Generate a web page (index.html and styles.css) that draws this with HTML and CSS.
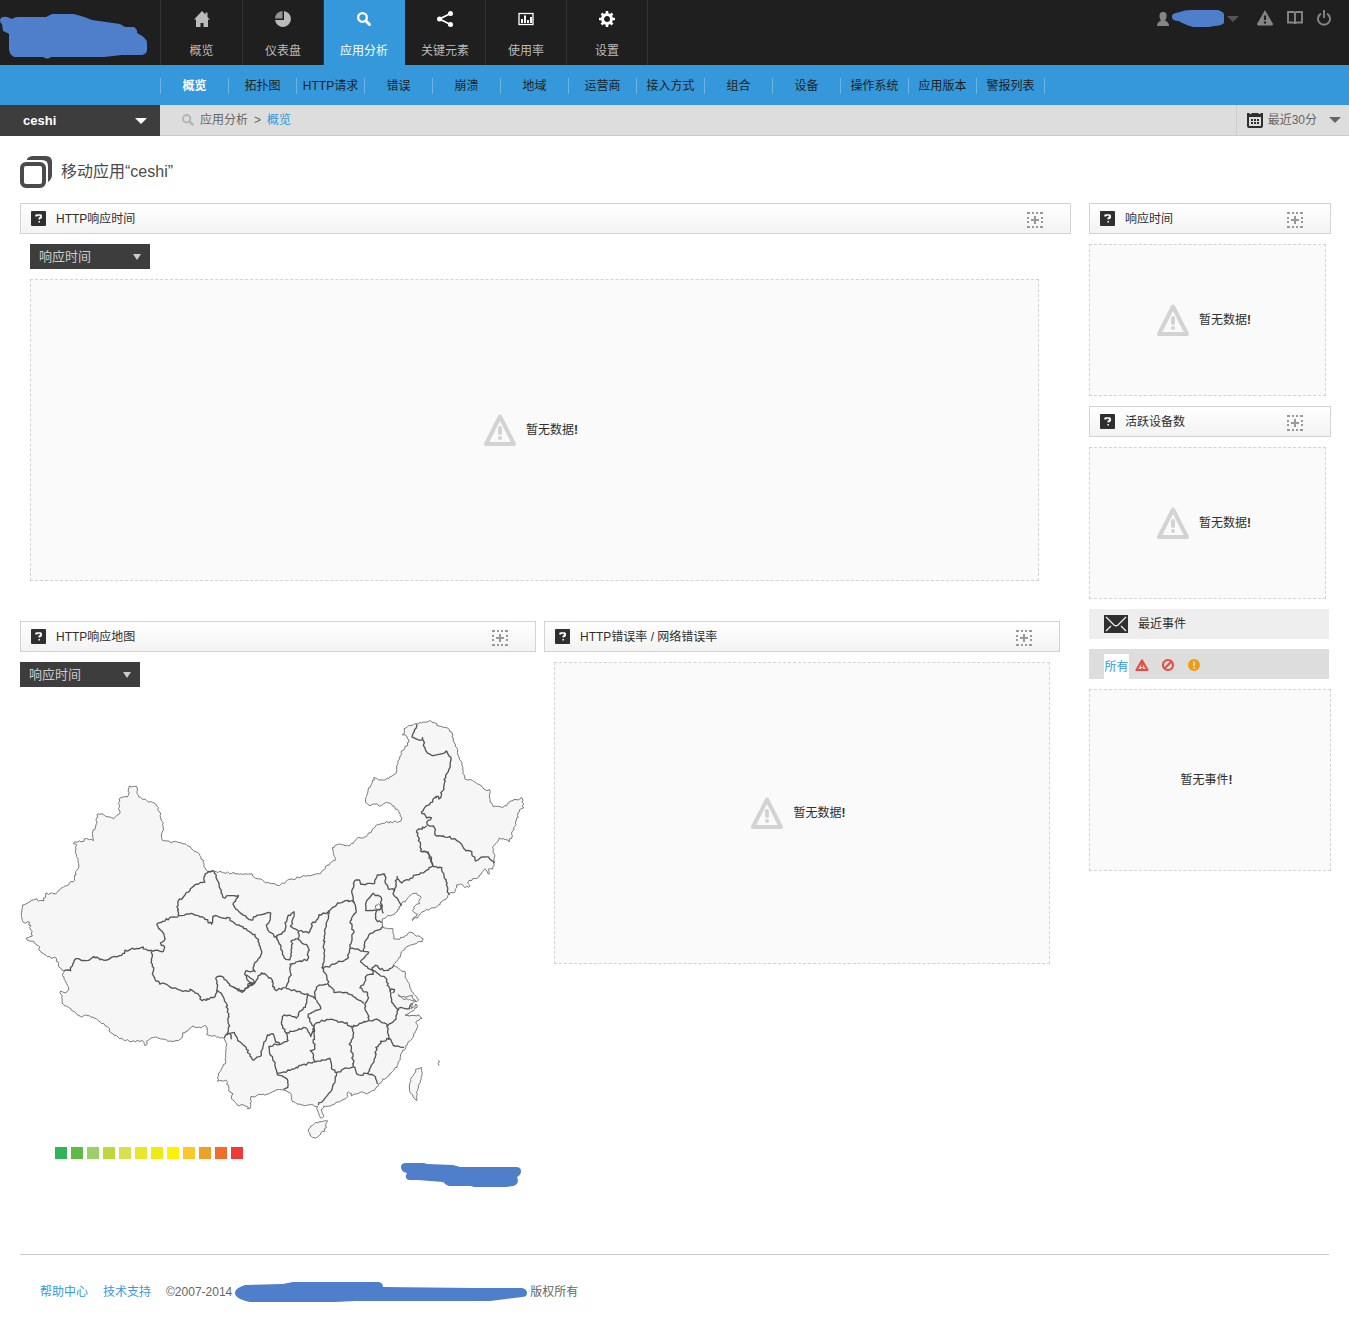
FILE: index.html
```html
<!DOCTYPE html>
<html lang="zh-CN">
<head>
<meta charset="utf-8">
<title>移动应用 - 概览</title>
<link rel="stylesheet" href="styles.css">
</head>
<body>
<svg class="defs" width="0" height="0" aria-hidden="true">
  <symbol id="help" viewBox="0 0 15 15"><rect width="15" height="15" rx="1" fill="#2f2f2f"/><path d="M5 5.6V4.5h1V4h3.500v.8h.7v1.700h-.8v.7H8.300v1.300M8.200 10v1.500" fill="none" stroke="#fff" stroke-width="1.500"/></symbol>
  <symbol id="add" viewBox="0 0 16 16"><path d="M0 1h3M5 1h2M9 1h2M13 1h3M0 15h3M5 15h2M9 15h2M13 15h3M1 5v2M1 9v2M15 5v2M15 9v2M8 4v8M4 8h8" fill="none" stroke="#999" stroke-width="2"/></symbol>
  <symbol id="warn" viewBox="0 0 32 32"><path d="M16 2.500 2 30h28z" fill="none" stroke="#d3d3d3" stroke-width="4" stroke-linejoin="round"/><path d="M16 14v5" stroke="#d3d3d3" stroke-width="4" stroke-linecap="round"/><circle cx="16" cy="24" r="2" fill="#d3d3d3"/></symbol>
  <symbol id="search" viewBox="0 0 12 12"><circle cx="4.700" cy="4.700" r="3.700" fill="none" stroke="currentColor" stroke-width="2"/><path d="m7.500 7.500 3.200 3.200" stroke="currentColor" stroke-width="2.500" stroke-linecap="round"/></symbol>
</svg>

<header class="topbar">
  <a class="logo" href="#" aria-label="首页"><svg width="148" height="65" viewBox="0 0 148 65"><path d="M0 20q1-4 7-3l5 2q2-2 6-2h28l6-3h22q8 2 18 6l28 4 5 3h9q4 3 3 6 10 5 10 10v7q0 4-5 5h-20l-18 2H51q-3 3-8 0H14q-5-3-5-8V34q-1-1-6-3L2 24Q0 23 0 20z" fill="#4f7ecb"/></svg></a>
  <nav class="mainnav">
    <a href="#"><svg width="16" height="16" viewBox="0 0 16 16"><path d="M8 0 0 8.500h2V16h4.500v-4h3v4H14V8.500h2L13.500 6V1.500h-2V3.500z" fill="currentColor"/></svg>概览</a>
    <a href="#"><svg width="16" height="16" viewBox="0 0 16 16"><path d="M9 0a8 8 0 1 1-9 9h9z" fill="currentColor"/><path d="M7.500 0v7.500H0A8 8 0 0 1 7.500 0z" fill="currentColor" opacity=".75"/></svg>仪表盘</a>
    <a href="#" class="active"><svg width="14" height="16" viewBox="0 0 14 16"><use href="#search" y="1" width="14" height="14"/></svg>应用分析</a>
    <a href="#" class="bright"><svg width="16" height="16" viewBox="0 0 16 16"><path d="M13.500 2.500 2.500 8l11 5.500" fill="none" stroke="currentColor" stroke-width="1.800"/><circle cx="13.500" cy="2.500" r="2.500" fill="currentColor"/><circle cx="2.500" cy="8" r="2.500" fill="currentColor"/><circle cx="13.500" cy="13.500" r="2.500" fill="currentColor"/></svg><span>关键元素</span></a>
    <a href="#" class="bright"><svg width="16" height="16" viewBox="0 0 16 16"><rect x="1" y="2.500" width="14" height="11" fill="none" stroke="currentColor" stroke-width="1.300"/><path d="M4 12V8M7 12V4.500M10 12V9M13 12V6" stroke="currentColor" stroke-width="2"/></svg><span>使用率</span></a>
    <a href="#" class="bright"><svg width="16" height="16" viewBox="0 0 16 16"><circle cx="8" cy="8" r="4.500" fill="none" stroke="currentColor" stroke-width="3"/><path d="M8 0v3M8 13v3M0 8h3M13 8h3M2.500 2.500l2 2M11.500 11.500l2 2M13.500 2.500l-2 2M2.500 13.500l2-2" stroke="currentColor" stroke-width="2.600"/></svg><span>设置</span></a>
  </nav>
  <div class="tools">
    <button class="user" type="button" aria-label="用户"><svg width="12" height="14" viewBox="0 0 12 14"><path d="M6 0c3 0 4 2 3.500 5Q9 8 8 8.500 12 10 12 14H0Q0 10 4 8.500 3 8 2.500 5 2 0 6 0z" fill="#858585"/></svg><svg width="54" height="18" viewBox="0 0 54 18"><path d="M1 6q0-3 8-4Q13 0 20 0h27q7 2 6 6v7q-3 3-10 3l-5 1H22Q10 13 8 11 0 11 1 6z" fill="#4f7ecb"/></svg><i class="caret dim"></i></button>
    <a href="#" aria-label="警报"><svg width="16" height="16" viewBox="0 0 16 16"><path d="M8 0 0 14q0 1.500 1.500 1.500h13Q16 15.500 16 14z" fill="#858585"/><path d="M8 5.500v4.500M8 11.500v2" stroke="#1f1f1f" stroke-width="2.200"/></svg></a>
    <a href="#" aria-label="文档"><svg width="16" height="16" viewBox="0 0 16 16"><path d="M1 2h5q2 0 2 1.500Q8 2 10 2h5v10.500h-5q-2 0-2 1.500 0-1.500-2-1.500H1zM8 3v10" fill="none" stroke="#858585" stroke-width="1.900"/></svg></a>
    <a href="#" aria-label="退出"><svg width="14" height="16" viewBox="0 0 14 16"><path d="M4 3.600a6 6 0 1 0 6 0M7 0v8" fill="none" stroke="#858585" stroke-width="1.900"/></svg></a>
  </div>
</header>

<nav class="subnav">
  <a href="#" class="active">概览</a><a href="#">拓扑图</a><a href="#">HTTP请求</a><a href="#">错误</a><a href="#">崩溃</a><a href="#">地域</a><a href="#">运营商</a><a href="#">接入方式</a><a href="#">组合</a><a href="#">设备</a><a href="#">操作系统</a><a href="#">应用版本</a><a href="#">警报列表</a>
</nav>

<div class="crumbbar">
  <button class="apppick" type="button">ceshi<i class="caret"></i></button>
  <div class="crumbs"><svg width="12" height="12"><use href="#search"/></svg><span>应用分析</span><span>&gt;</span><a href="#">概览</a></div>
  <button class="range" type="button"><svg width="16" height="16" viewBox="0 0 16 16"><path d="M1 2h14v12q0 1-1 1H2q-1 0-1-1z" fill="none" stroke="#2f2f2f" stroke-width="2"/><path d="M1 3.500h14" stroke="#2f2f2f" stroke-width="3"/><path d="M3.500 0v2M12.500 0v2" stroke="#ddd" stroke-width="2"/><path d="M4 8h8M4 11h8" stroke="#2f2f2f" stroke-width="2" stroke-dasharray="2 1"/></svg><span>最近30分</span><i class="caret"></i></button>
</div>

<main>
  <h1><svg width="32" height="32" viewBox="0 0 32 32"><path d="M7 3Q9 0 13 0h13q6 0 6 6v13q0 4-4 7V10q0-6-6-6H7z" fill="#4b4b4b"/><rect x="2" y="8" width="22" height="22" rx="4" fill="#fff" stroke="#4b4b4b" stroke-width="4"/></svg>移动应用“ceshi”</h1>
  <div class="columns">
    <div class="left">
      <section>
        <h2><svg width="15" height="15"><use href="#help"/></svg><span>HTTP响应时间</span><button type="button" aria-label="添加"><svg width="16" height="16"><use href="#add"/></svg></button></h2>
        <div class="inset">
          <label class="pick"><select aria-label="指标"><option>响应时间</option></select></label>
          <div class="empty tall"><svg width="32" height="32"><use href="#warn"/></svg><span>暂无数据<b>!</b></span></div>
        </div>
      </section>
      <div class="pair">
        <section class="mapcard">
          <h2><svg width="15" height="15"><use href="#help"/></svg><span>HTTP响应地图</span><button type="button" aria-label="添加"><svg width="16" height="16"><use href="#add"/></svg></button></h2>
          <label class="pick"><select aria-label="地图指标"><option>响应时间</option></select></label>
          <svg class="map" viewBox="20 700 516 440" role="img" aria-label="地图">
            <g transform="translate(200 860) scale(.33333)" class="land">
              <path class="coast" d="M22 34 14 23 7 0-2-12-4-23-18-27-30-38-48-50-70-53-90-54-114-59-119-70-112-90-111-115-120-135-127-160-140-172-155-173-170-183-185-195-189-220-200-222-212-219-214-202-220-192-240-187-244-172-242-140-252-130-264-125-285-132-306-140-314-105-322-70-317-58-330-62-340-64-355-57-382-50-370-42-373-20-365 5-363 20-373 30-377 60-400 75-418 85-428 99-460 101-472 123-485 125-492 117-508 120-515 130-530 135-536 148-538 170-534 186-512 188-508 210-503 228-520 238-500 245-485 257-478 278-455 290-432 296-425 320-407 332-412 345-402 370-395 388-405 398-421 395-413 410-414 432-395 442-375 458-353 474-342 465-328 468-300 485-280 500-270 515-250 530-230 540-195 545-170 542-163 560-157 542-135 530-105 538-80 547-60 538-50 520-22 500-5 503 15 495 22 505 22 527 50 530 68 535 78 550 80 580 75 610 55 640 52 664 80 660 85 690 100 700 95 718 118 738 140 735 145 748 152 745 155 712 175 705 200 705 220 692 250 688 272 700 280 725 300 735 330 735 352 740 355 765 365 776 372 768 362 755 370 742 395 735 420 725 440 715 445 692 455 708 480 698 505 700 522 690 535 675 555 655 575 635 595 615 600 590 612 570 625 550 640 530 652 500 650 485 665 475 655 465 615 465 640 455 652 440 640 425 655 420 640 405 625 370 612 335 580 315 600 292 605 275 620 262 640 250 665 245 670 232 645 225 628 215 615 228 595 240 582 235 578 208 550 200 545 180 560 168 580 165 590 155 600 136 625 115 640 100 655 102 663 115 655 130 642 140 640 155 650 165 635 180 650 175 665 158 685 148 710 140 730 120 747 105 762 95 775 71 795 80 810 83 805 65 830 55 848 40 855 27 868 42 865 30 880 25 883 10 883-15 878-45 890-53 898-65 928-56 937-80 950-115 957-150 970-158 967-187 950-182 930-175 918-160 878-160 870-180 868-210 855-210 845-222 825-235 793-245 785-290 775-320 762-355 755-380 740-397 715-402 695-416 665-412 635-407 615-395 608-377 623-370 625-350 605-325 592-285 588-260 570-250 552-236 523-248 505-205 496-178 505-163 530-168 540-160 553-174 570-172 595-145 605-125 600-116 550-112 525-102 515-85 498-70 475-67 450-43 405-48 396-30 405 0 382 18 370 35 345 46 300 50 270 60 235 77 200 68 165 52 152 43 110 40 42 35z"/>
              <path class="coast" d="M325 815l7-20 23-10 27-1-4 21-28 30-20-7zM665 622l3 18-13 40-7 42-20-32 2-30 20-30zM714 602l4 5-1 10"/>
              <path class="coast" d="M595 403l15 8 25-3 15 15-15-5-25 0zM615 465l20 4 20-4M640 425l-8 22 15-15M528 135l10-4 4 15-13 2z"/>
            </g>
            <g transform="translate(10 770) scale(.33333)" class="inner">
              <path d="M163 602l19-1 5-21 8-14 15 4 20 3 15-11 17-1 6 7 22 1 20-9 25-5 10-12 25-7 25-3 29 11 16-2 20 4 3-11-10-18 14-7-7-20-17-20-5-7 32-15 37-11-4-27 5-22 12-2 10-16 20-22 25-10 9-3v-23l8-7 20-1"/>
              <path d="M424 544l3 16-5 10 8 20-2 25 7 15 15 12 18-2 17 15 35 7 28-2 20 20 7 12 15-2 22-7 8-20 15 12 13 25 7 30 2 45-7 15-7 15M507 437l38-7 25 8 20 12 16 16 2-30 27 10 20-2 35 24 25 14 20 13 11 15 4 20 7 15-12 20-17 25 7 15-30 0 5 20 18 15-13 10-15 15-25-10-25-20-10-13-22-2 4 20-2 23"/>
            </g>
            <g transform="translate(200 860) scale(.33333)" class="inner">
              <path d="M42 35l13 35 15 45 20-10 25 3-17 27 32 30 23 19 12-14 25-5 23-7v14l-15 33 27 25 27-15 10-45 18-12v22l-8 20 26 12-5 26-21 2 6 20-8 40-20-10-10-40-15-20M298 212l32 8 5-25 25-30 28-13 27-24 25-6 20 2-3-34 8-25 13-8 2 18 45-7 5-23 23-5 9 45 23 3 5-38 15 20 35-22 40-16 17-17 0-18-17-22-14 0"/>
              <path d="M293 238l32 24v38l-22 2-33 10 3 28-15 45-36 5-4-30-33-22-20 27-40 30-25-13M138 345l20 10 8 15-20 2 0 12M258 385l42 10 22 10 28 15-5-25 10-20 30-3-5-22-12-25 5-35-1-50 6-50 10-38M368 325l42-15 35-15 3-30 12-50-10-35 20-30-10-26M448 265l42 8 18 5-28 30 35 20 10-13 20 13 25 2 12-15M490 273l5-28 15-25 40-20M585 88l-5 12 17 20 5 17M497 135l3-15 22-20 21 15 2 30-15 7-33-2zM530 152l-2 26 17 10M543 130l7 30"/>
              <path d="M515 328l7 17-22 0-5 25-13 10 8 15 15 5v20l-13 10 16 50 32 0 22 15 23-15 10-35-20-15-5-35-10-35-25-20zM570 395l8-12 8 8-8 8M595 445l35 0 5-15M385 372l20 23 45 5 20 15 22 15M322 405l-2 25-15 20-15 22-40-7-5 25 15 30 40-15 18 0 17 25 7-30-12-15-5-25 37-15-12-25M342 500l8-13 35-9 55 12 15 12 53-22M455 502l5 28-10 25 8 35 2 30-30 8-20 12-15-15-5-30-45 10-13-35 13-5-5-35 2-30M345 605l-50 15-35 15-30 5-5-30-15-30-5-20 35-10 25-5-5-25M90 520l10-5 15 25 20 20 23 40 24-10 6-30 17-35 15-5 5 25 15 5M230 640l35 20-3 25-12 3M410 640l-10 40-25 35-20 20M460 620l15 25 28-5 17-35 10-40 15-20 23-10-6-40M568 535l12 23 32 4M503 640l22 5 7 27M80 525l10-5 5 18"/>
            </g>
            <g transform="translate(350 710) scale(.33333)" class="inner">
              <path d="M200 43l-5 17-10 18 20 14 15-7 5 40 20 13 35-6 8-10 17 26-8 32-12 20-2 28-15 40-6-13-22 25-25 25 15 17 13 3-13 7 2 16 20 0 6 27 37 5 33 15 17 25 17 5 16 30 17-15 15-3 23 23M247 465l28 10 15 45 7 35M247 465l-14-40-20 0-8-45-5-18 30-14"/>
            </g>
          </svg>
          <div class="legend"><i class="c1"></i><i class="c2"></i><i class="c3"></i><i class="c4"></i><i class="c5"></i><i class="c6"></i><i class="c7"></i><i class="c8"></i><i class="c9"></i><i class="c10"></i><i class="c11"></i><i class="c12"></i></div>
          <svg class="credit" width="120" height="26" viewBox="0 0 120 26"><path d="M0 5q0-4 5-4h18l3 1 26 1 7 2h56q5 0 5 4t-4 6q3 7-4 9l-7 1H73l-3-1H48q-3-1-6-4l-25-2H8q-4-1-3-5l1-2Q0 10 0 5z" fill="#4f7ecb"/></svg>
        </section>
        <section>
          <h2><svg width="15" height="15"><use href="#help"/></svg><span>HTTP错误率 / 网络错误率</span><button type="button" aria-label="添加"><svg width="16" height="16"><use href="#add"/></svg></button></h2>
          <div class="inset narrow"><div class="empty tall"><svg width="32" height="32"><use href="#warn"/></svg><span>暂无数据<b>!</b></span></div></div>
        </section>
      </div>
    </div>
    <aside>
      <h2><svg width="15" height="15"><use href="#help"/></svg><span>响应时间</span><button type="button" aria-label="添加"><svg width="16" height="16"><use href="#add"/></svg></button></h2>
      <div class="empty short"><svg width="32" height="32"><use href="#warn"/></svg><span>暂无数据<b>!</b></span></div>
      <h2><svg width="15" height="15"><use href="#help"/></svg><span>活跃设备数</span><button type="button" aria-label="添加"><svg width="16" height="16"><use href="#add"/></svg></button></h2>
      <div class="empty short"><svg width="32" height="32"><use href="#warn"/></svg><span>暂无数据<b>!</b></span></div>
      <h3><svg width="24" height="18" viewBox="0 0 24 18"><rect width="24" height="18" fill="#2f2f2f"/><path d="m2 2 8 8q2 1.500 4 0l8-8M2 16l5-5M22 16l-5-5" fill="none" stroke="#eee" stroke-width="1.300"/></svg>最近事件</h3>
      <div class="tabs">
        <button type="button" class="all">所有</button>
        <button type="button" aria-label="警告"><svg width="14" height="14" viewBox="0 0 14 14"><path d="M7 2.500 1.500 12h11z" fill="none" stroke="#e74c3c" stroke-width="2.200" stroke-linejoin="round"/><path d="M7 5v4M7 10v1.500" stroke="#e74c3c" stroke-width="1.800"/></svg></button>
        <button type="button" aria-label="禁止"><svg width="14" height="14" viewBox="0 0 14 14"><circle cx="7" cy="7" r="5" fill="none" stroke="#e74c3c" stroke-width="2.200"/><path d="m3.500 10.500 7-7" stroke="#e74c3c" stroke-width="2"/></svg></button>
        <button type="button" aria-label="提示"><svg width="14" height="14" viewBox="0 0 14 14"><circle cx="7" cy="7" r="6" fill="#f39c12"/><path d="M7 3.500v4.500M7 9v1.800" stroke="#ddd" stroke-width="1.800"/></svg></button>
      </div>
      <div class="empty events"><span>暂无事件<b>!</b></span></div>
    </aside>
  </div>
</main>

<footer>
  <a href="#">帮助中心</a><a href="#">技术支持</a>
  <span class="copy">©2007-2014<svg width="292" height="20" viewBox="0 0 292 20"><path d="M0 11q0-5 10-8l38-1 10-2h86q4 1 4 5l90 1h49q5 1 5 5t-5 4l-32 4H120l-20 1H15Q0 17 0 11z" fill="#4f7ecb"/></svg>版权所有</span>
</footer>
<script src="map.js"></script>
</body>
</html>
```

FILE: map.js
```js
// Adds fine irregularity to the simplified province borders.
let seed = 7;
function jitter(amount) {
  seed = (seed * 16807) % 2147483647;
  return (seed / 2147483647 - 0.5) * amount;
}
document.querySelectorAll('.map path').forEach(function (path) {
  const probe = document.createElementNS('http://www.w3.org/2000/svg', 'path');
  const parts = path.getAttribute('d').split(/(?=M)/).map(function (part) {
    probe.setAttribute('d', part);
    const length = probe.getTotalLength();
    const steps = Math.max(2, Math.round(length / 6));
    const points = [];
    for (let i = 0; i <= steps; i++) {
      const p = probe.getPointAtLength(length * i / steps);
      const amount = i === 0 || i === steps ? 0 : 6;
      points.push((p.x + jitter(amount)).toFixed(1) + ' ' + (p.y + jitter(amount)).toFixed(1));
    }
    return 'M' + points.join('L');
  });
  path.setAttribute('d', parts.join(''));
});
```

FILE: styles.css
```css
* { box-sizing: border-box; }
body {
  margin: 0;
  background: #fff;
  color: #2f2f2f;
  font: 12px/20px "Liberation Sans", "Noto Sans CJK SC", sans-serif;
}
a { color: #3498db; text-decoration: none; }
button { border: 0; padding: 0; background: none; font: inherit; color: inherit; cursor: pointer; }
svg { display: block; flex: none; }
.defs { position: absolute; }

.caret {
  width: 0;
  height: 0;
  border: 6px solid transparent;
  border-top-color: currentColor;
  border-bottom: 0;
}

.topbar { display: flex; height: 65px; background: #1f1f1f; }
.logo { width: 160px; flex: none; }
.mainnav { display: flex; border-left: 1px solid #333; }
.mainnav a {
  display: flex;
  flex-direction: column;
  align-items: center;
  gap: 14px;
  width: 81px;
  padding-top: 11px;
  border-right: 1px solid #333;
  color: #bbb;
}
.mainnav a:first-child { width: 82px; }
.mainnav a.active { background: #3498db; border-color: #3498db; color: #fff; }
.mainnav .bright { color: #fff; }
.mainnav .bright span { color: #bbb; }
.tools { display: flex; align-items: flex-start; gap: 14px; margin-left: auto; padding: 10px 18px 0 0; }
.user { display: flex; align-items: center; gap: 2px; height: 18px; margin-right: 4px; }
.dim { color: #555; }

.subnav { display: flex; align-items: center; height: 40px; padding: 2px 0 0 160px; background: #3498db; }
.subnav a {
  width: 68px;
  height: 16px;
  line-height: 16px;
  border-left: 1px solid #6fb3e3;
  text-align: center;
  white-space: nowrap;
  color: #1f1f1f;
}
.subnav a:last-child { width: 69px; border-right: 1px solid #6fb3e3; }
.subnav .active { color: #fff; font-weight: bold; }

.crumbbar { display: flex; height: 31px; background: #ddd; border-bottom: 1px solid #ccc; }
.apppick {
  display: flex;
  align-items: center;
  justify-content: space-between;
  width: 160px;
  height: 31px;
  padding: 0 13px 0 23px;
  background: #3d3d3d;
  color: #fff;
  font-size: 13px;
  font-weight: bold;
}
.crumbs { display: flex; align-items: center; gap: 6px; padding-left: 22px; color: #666; }
.crumbs svg { color: #b5b5b5; }
.range {
  display: flex;
  align-items: center;
  gap: 5px;
  margin-left: auto;
  padding: 0 8px 0 10px;
  border-left: 1px solid #ccc;
  color: #666;
}
.range .caret { margin-left: 7px; }

main { padding: 20px 18px 0 20px; }
h1 { display: flex; align-items: center; gap: 9px; margin: 0 0 15px; font-size: 16px; font-weight: normal; line-height: 32px; color: #4b4b4b; }
.columns { display: flex; gap: 18px; }
.left { flex: 1; min-width: 0; }
aside { width: 242px; flex: none; }
h2 {
  display: flex;
  align-items: center;
  gap: 10px;
  height: 31px;
  margin: 0 0 10px;
  padding: 0 27px 0 10px;
  border: 1px solid #d3d3d3;
  background: linear-gradient(#fff, #f3f3f3);
  font-size: 12px;
  font-weight: normal;
}
h2 button { margin-left: auto; padding-top: 2px; }
.inset { margin: 0 32px 40px 10px; }
.inset.narrow { margin-right: 10px; }
.pick {
  display: flex;
  align-items: center;
  position: relative;
  width: 120px;
  height: 25px;
  background: #3d3d3d;
}
.pick select {
  appearance: none;
  width: 100%;
  height: 25px;
  padding: 0 9px;
  border: 0;
  background: none;
  color: #ccc;
  font: 13px/25px "Liberation Sans", "Noto Sans CJK SC", sans-serif;
}
.pick::after {
  content: "";
  position: absolute;
  right: 9px;
  border: 4px solid transparent;
  border-top: 6px solid #ccc;
  border-bottom: 0;
  pointer-events: none;
}
.pick + .empty { margin-top: 10px; }
.empty {
  display: flex;
  align-items: center;
  justify-content: center;
  gap: 10px;
  padding-right: 7px;
  border: 1px dashed #d3d3d3;
  background: #fafafa;
}
.tall { height: 302px; }
.short { height: 152px; margin: 0 5px 10px 0; }
.events { height: 182px; }

.pair { display: grid; grid-template-columns: 1fr 1fr; gap: 8px; margin-right: 11px; }
.mapcard { display: flex; flex-direction: column; }
.map { width: 100%; margin-top: 13px; }
.land .coast { fill: #f6f6f6; stroke: #777; stroke-width: 3; stroke-linejoin: round; }
.inner { fill: none; stroke: #555; stroke-width: 4; stroke-linejoin: round; }
.legend { display: flex; gap: 4px; margin: 7px 0 3px 35px; }
.legend i { width: 12px; height: 12px; }
.c1 { background: #2fb457; }
.c2 { background: #5fba46; }
.c3 { background: #9bcf68; }
.c4 { background: #bfd73a; }
.c5 { background: #d9e04f; }
.c6 { background: #e9e727; }
.c7 { background: #eeea12; }
.c8 { background: #fff200; }
.c9 { background: #fdc729; }
.c10 { background: #eba327; }
.c11 { background: #f16b29; }
.c12 { background: #ef3b35; }
.credit { align-self: flex-end; margin-right: 15px; }

h3 {
  display: flex;
  align-items: center;
  gap: 10px;
  height: 30px;
  margin: 0 2px 10px 0;
  padding-left: 15px;
  background: #eee;
  font-size: 12px;
  font-weight: normal;
}
.tabs { display: flex; align-items: center; gap: 12px; height: 30px; margin: 0 2px 10px 0; padding: 2px 0 0 15px; background: #ddd; }
.tabs .all { align-self: flex-end; width: 25px; height: 25px; margin-right: -6px; background: #fff; color: #3498db; }

footer {
  display: flex;
  align-items: center;
  gap: 15px;
  margin: 66px 20px 0;
  padding: 27px 20px 23px;
  border-top: 1px solid #ccc;
  color: #666;
}
.copy { display: flex; align-items: center; gap: 3px; }
```
